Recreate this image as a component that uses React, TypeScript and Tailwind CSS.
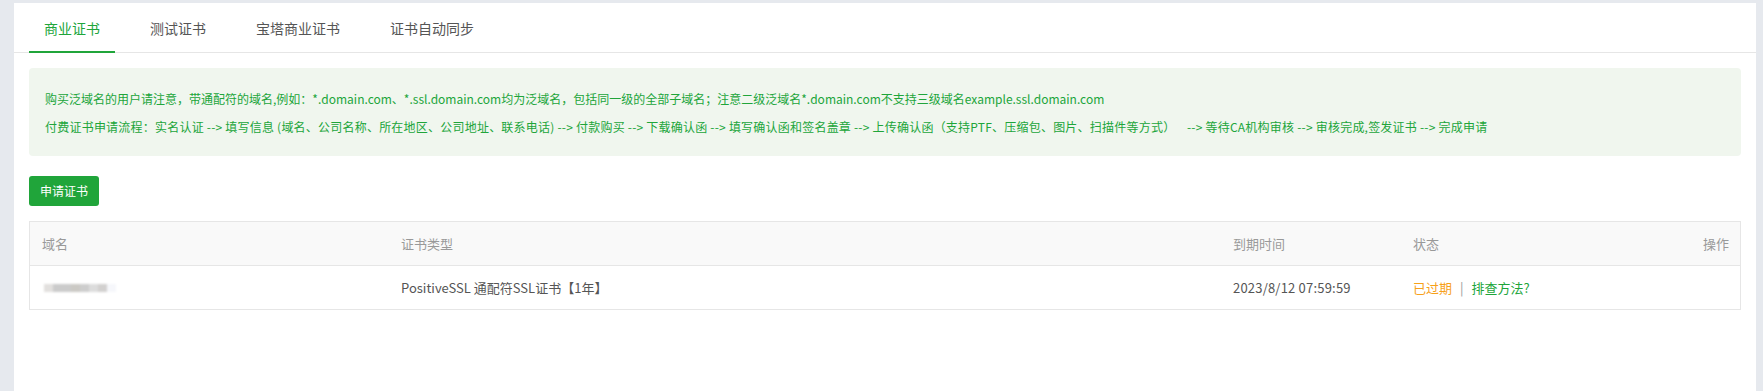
import React from "react";

const FONT = { fontFamily: '"Noto Sans CJK SC", "Noto Sans", sans-serif' };

const tabs = ["商业证书", "测试证书", "宝塔商业证书", "证书自动同步"];

export default function App() {
  return (
    <div className="min-h-[391px] h-[391px] bg-[#e6e9ee] pt-[3px] pl-[14px] pr-[7px]" style={FONT}>
      <div className="h-full bg-white">
        {/* tabs */}
        <div className="flex h-[50px] border-b border-[#e6e6e6] pl-[15px] gap-[20px]">
          {tabs.map((t, i) => (
            <div
              key={t}
              className={
                i === 0
                  ? "relative flex items-center px-[15px] text-[14px] leading-[20px] text-[#20a53a]"
                  : "relative flex items-center px-[15px] text-[14px] leading-[20px] text-[#555]"
              }
            >
              {t}
              {i === 0 && <div className="absolute left-0 right-0 bottom-[-1px] h-[2px] bg-[#20a53a]" />}
            </div>
          ))}
        </div>

        <div className="px-[15px] pt-[15px]">
          {/* notice */}
          <div className="rounded-[4px] bg-[#f0f6ee] pl-[16px] pr-[16px] pt-[17px] pb-[15px] text-[12px] leading-[28px] text-[#20a53a]">
            <p>
              购买泛域名的用户请注意，带通配符的域名,例如：*.domain.com、*.ssl.domain.com均为泛域名，包括同一级的全部子域名；注意二级泛域名*.domain.com不支持三级域名example.ssl.domain.com
            </p>
            <p className="tracking-[0.22px]">
              {"付费证书申请流程：实名认证 --> 填写信息 (域名、公司名称、所在地区、公司地址、联系电话) --> 付款购买 --> 下载确认函 --> 填写确认函和签名盖章 --> 上传确认函（支持PTF、压缩包、图片、扫描件等方式）\u00a0\u00a0\u00a0\u00a0--> 等待CA机构审核 --> 审核完成,签发证书 --> 完成申请"}
            </p>
          </div>

          {/* button */}
          <div className="mt-[20px] flex">
            <button className="h-[30px] rounded-[3px] bg-[#20a53a] px-[11px] text-[12px] leading-[30px] text-white">
              申请证书
            </button>
          </div>

          {/* table */}
          <div className="mt-[15px] border border-[#e6e6e6]">
            <div className="grid h-[44px] grid-cols-[359px_832px_180px_1fr_120px] items-center border-b border-[#e6e6e6] bg-[#f9f9f9] text-[13px] text-[#999]">
              <div className="px-[12px]">域名</div>
              <div className="px-[12px]">证书类型</div>
              <div className="px-[12px]">到期时间</div>
              <div className="px-[12px]">状态</div>
              <div className="px-[11px] text-right">操作</div>
            </div>
            <div className="grid h-[43px] grid-cols-[359px_832px_180px_1fr_120px] items-center text-[13px] text-[#555]">
              <div className="px-[14px]">
                <div className="flex h-[8px] w-[72px] blur-[1px]">
                  <div className="w-[9px] bg-[#e2e0de]" />
                  <div className="w-[18px] bg-[#cbcbcb]" />
                  <div className="w-[9px] bg-[#cbc9c4]" />
                  <div className="w-[9px] bg-[#cdcdcd]" />
                  <div className="w-[9px] bg-[#dcdcdc]" />
                  <div className="w-[9px] bg-[#d2d0cf]" />
                  <div className="w-[9px] bg-[#f6f7fb]" />
                </div>
              </div>
              <div className="px-[12px]">PositiveSSL 通配符SSL证书【1年】</div>
              <div className="px-[12px] tracking-[0.2px]">2023/8/12 07:59:59</div>
              <div className="px-[12px]">
                <span className="text-[#f7a11a]">已过期</span>
                <span className="mx-[8px] text-[#999]">|</span>
                <span className="text-[#20a53a]">排查方法?</span>
              </div>
              <div />
            </div>
          </div>
        </div>
      </div>
    </div>
  );
}
